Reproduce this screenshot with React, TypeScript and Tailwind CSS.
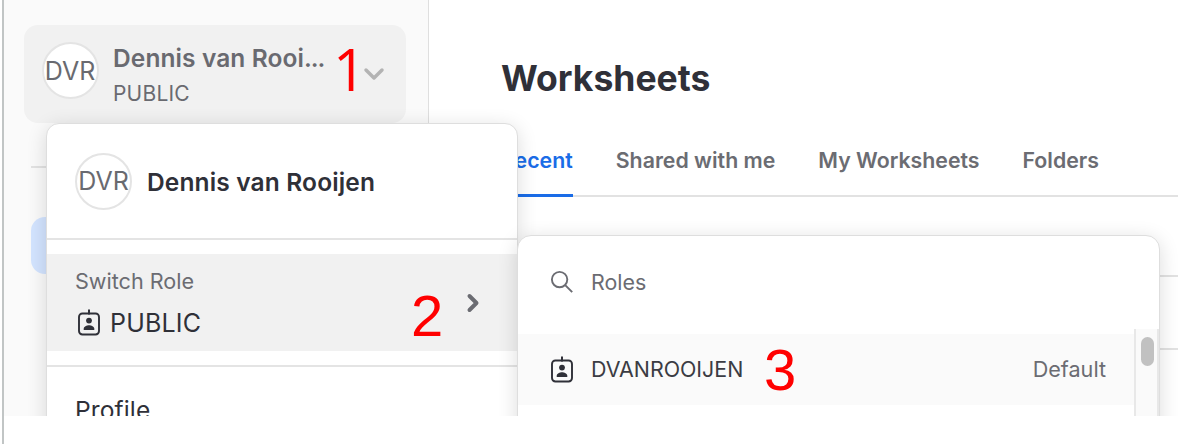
import { ChevronDown, ChevronRight } from "lucide-react";

function RoleIcon() {
  return (
    <svg width="24" height="28" viewBox="0 0 24 28" fill="none" className="shrink-0 text-[#2f3038]">
      <rect x="2" y="4.5" width="20" height="21" rx="3.4" stroke="currentColor" strokeWidth="1.9" />
      <path d="M12 .4v5" stroke="currentColor" strokeWidth="2" />
      <circle cx="12" cy="11.6" r="2.9" fill="currentColor" />
      <path d="M6.7 21v-1c0-2.5 3.1-3.7 5.3-3.7s5.3 1.2 5.3 3.7v1z" fill="currentColor" />
    </svg>
  );
}

function SearchIcon() {
  return (
    <svg width="24" height="24" viewBox="0 0 24 24" fill="none" stroke="#6b6c72" strokeWidth="1.9">
      <circle cx="9.6" cy="9.6" r="7.7" />
      <path d="M15.2 15.2l7 7" />
    </svg>
  );
}

function Avatar() {
  return (
    <div className="flex h-[57px] w-[57px] shrink-0 items-center justify-center rounded-full border-2 border-[#e4e4e4] bg-white text-[25px] leading-[30px] text-[#696a70]">
      DVR
    </div>
  );
}

function Sidebar() {
  return (
    <aside className="h-full w-[425px] shrink-0 border-r border-[#dfdfdf] bg-[#fafafa] pl-5 pt-[25px]">
      <div className="flex h-[98px] w-[382px] rounded-[14px] bg-[#f1f1f1] pl-[17.5px] pt-[17px]">
        <Avatar />
        <div className="ml-[14.5px] w-[222px] whitespace-nowrap text-[#696a70]">
          <div className="h-[32px] text-[24.5px] font-semibold leading-[33px] tracking-[0.1px]">
            Dennis van Rooi<span className="tracking-[-1.1px]">...</span>
          </div>
          <div className="mt-[5px] text-[21px] leading-[30px] tracking-[0.2px]">PUBLIC</div>
        </div>
        <ChevronDown className="ml-[22.5px] mt-[16px] h-8 w-8 text-[#b3b3b3]" strokeWidth={2.6} />
      </div>
      <div className="ml-[7px] mt-[43px] h-0.5 w-20 bg-[#e2e2e2]" />
      <div className="ml-[7px] mt-[49px] h-[57px] w-[360px] rounded-[14px] bg-[#d3e4ff]" />
    </aside>
  );
}

function Worksheets() {
  return (
    <main className="flex-1 pt-[59px]">
      <h1 className="ml-[72px] h-10 text-[35.5px] font-bold leading-[40px] text-[#2f3038]">Worksheets</h1>
      <nav className="ml-[72px] mt-[41px] flex h-[57px] gap-[43px] whitespace-nowrap border-b-2 border-[#e2e2e2] text-[21.3px] font-semibold leading-[40px] text-[#6b6c72]">
        <span className="h-[57px] border-b-[3px] border-[#1a6ce7] text-[#1a6ce7]">Recent</span>
        <span>Shared with me</span>
        <span>My Worksheets</span>
        <span>Folders</span>
      </nav>
      <div className="ml-[72px] h-[80px] border-b-2 border-[#e2e2e2]" />
      <div className="ml-[72px] h-[73px] border-b-2 border-[#e2e2e2]" />
    </main>
  );
}

function AccountMenu() {
  return (
    <div className="absolute left-[42px] top-[123px] w-[472px] rounded-[13px] border border-[#dedede] bg-white pb-20 shadow-[0_4px_20px_rgba(0,0,0,0.14)]">
      <div className="flex h-[116px] items-center border-b-2 border-[#e4e4e4] pl-7">
        <Avatar />
        <span className="ml-[15px] whitespace-nowrap pt-px text-[24.5px] font-semibold leading-[30px] tracking-[0.15px] text-[#2f3038]">
          Dennis van Rooijen
        </span>
      </div>
      <div className="border-b-2 border-[#e4e4e4] py-[14px]">
        <div className="flex h-[97px] items-center bg-[#f1f1f1] pl-7">
          <div className="w-[391px]">
            <div className="text-[21.6px] leading-[30px] text-[#6b6c72]">Switch Role</div>
            <div className="mt-[11px] flex items-center gap-[9px] pl-0.5 text-[25px] leading-[32px] tracking-[0.2px] text-[#2f3038]">
              <RoleIcon />
              PUBLIC
            </div>
          </div>
          <ChevronRight className="-ml-[7px] h-7 w-7 text-[#6b6c72]" strokeWidth={3.4} />
        </div>
      </div>
      <div className="mt-[27px] pl-7 text-[24.6px] leading-[32px] tracking-[0.1px] text-[#2f3038]">Profile</div>
    </div>
  );
}

function RolesMenu() {
  return (
    <div className="absolute left-[513px] top-[235px] w-[643px] rounded-[14px] border border-[#dedede] bg-white shadow-[0_4px_20px_rgba(0,0,0,0.14)]">
      <div className="flex h-[92px] items-center gap-[17px] pl-8 text-[21.4px] leading-[30px] text-[#6b6c72]">
        <SearchIcon />
        Roles
      </div>
      <div className="flex h-[160px] pt-px">
        <div className="flex-1 pt-[5px]">
          <div className="flex h-[71px] items-center bg-[#fafafa] pl-8 pr-7 text-[21.4px] leading-[30px]">
            <RoleIcon />
            <span className="ml-[17px] pb-px text-[#3b3c43]">DVANROOIJEN</span>
            <span className="ml-auto pb-px text-[21.6px] text-[#6b6c72]">Default</span>
          </div>
        </div>
        <div className="w-[25px] border-x-2 border-[#e8e8e8] bg-[#fafafa] pl-[5px] pt-2">
          <div className="h-[29px] w-[13px] rounded-full bg-[#c1c1c1]" />
        </div>
      </div>
    </div>
  );
}

export default function App() {
  return (
    <div className="h-[444px] w-[1190px] overflow-hidden border-l-2 border-white bg-white font-['Inter',sans-serif]">
      <div className="h-full border-l-2 border-[#c1c5c5]">
        <div className="relative flex h-[416px] w-[1174px] overflow-hidden">
          <Sidebar />
          <Worksheets />
          <AccountMenu />
          <RolesMenu />
          <div className="font-['Liberation_Sans',sans-serif] text-[58px] leading-[60px] text-[#ff0000]">
            <span className="absolute left-[329px] top-[39px] font-['Open_Sans',sans-serif] font-medium">1</span>
            <span className="absolute left-[407px] top-[286px]">2</span>
            <span className="absolute left-[760px] top-[340px]">3</span>
          </div>
        </div>
      </div>
    </div>
  );
}
